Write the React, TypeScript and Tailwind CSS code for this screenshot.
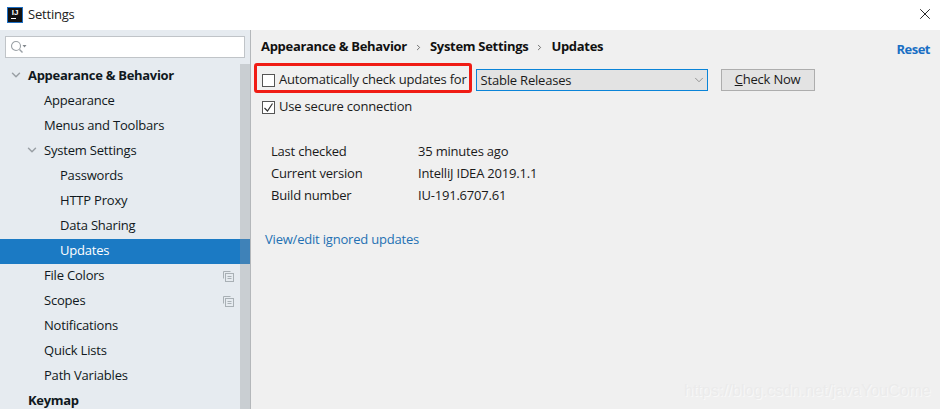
import { ChevronDown, ChevronRight, X } from "lucide-react"

const font = "font-['Open_Sans','Noto_Sans',sans-serif]"

function TreeRow({ label, indent, open, bold, selected, copy }: {
  label: string
  indent: string
  open?: boolean
  bold?: boolean
  selected?: boolean
  copy?: boolean
}) {
  return (
    <div className={`h-[25px] shrink-0 flex items-center relative ${selected ? "bg-[#1b7ac4] text-white" : "text-[#101820]"}`}>
      <div className={`${indent} mt-[-2px] flex items-center ${bold ? "font-bold tracking-[-0.3px]" : ""}`}>{label}</div>
      {open && <ChevronDown className={`absolute ${bold ? "left-[9px]" : "left-[25px]"} top-[4px] w-[14px] h-[14px] text-[#9aa0a5]`} strokeWidth={2.5} />}
      {copy && <CopyIcon />}
    </div>
  )
}

function CopyIcon() {
  return (
    <svg className="absolute left-[223px]" width="11" height="11" viewBox="0 0 11 11" fill="none" stroke="#a9b0b5">
      <path d="M.5 7.5v-7h7" />
      <rect x="2.5" y="2.5" width="8" height="8" />
      <path d="M4.5 5.5h4M4.5 7.5h4" />
    </svg>
  )
}

function InfoRow({ label, value }: { label: string; value: string }) {
  return (
    <div className="h-[22px] flex items-center">
      <div className="w-[147px]">{label}</div>
      <div>{value}</div>
    </div>
  )
}

export default function App() {
  return (
    <div className={`${font} w-[940px] h-[409px] overflow-hidden bg-white text-[13px] tracking-[-0.2px] text-[#1a1a1a] flex flex-col relative`}>
      {/* Title bar */}
      <div className="h-[30px] shrink-0 flex items-center bg-white relative">
        <div className="ml-[7px] w-[16px] h-[16px] bg-[#111] border border-[#1d6fc4] flex flex-col items-center justify-start">
          <span className="text-[8px] leading-[9px] font-bold text-white font-['Liberation_Sans',sans-serif]">IJ</span>
          <span className="ml-[-4px] w-[5px] h-px bg-white mt-[1px]" />
        </div>
        <span className="ml-[5px] text-[13px] text-[#222]">Settings</span>
        <X className="absolute left-[916px] top-[5px] w-[18px] h-[18px] text-[#111]" strokeWidth={1.2} />
      </div>

      <div className="flex-1 flex min-h-0">
        {/* Sidebar */}
        <div className="w-[251px] shrink-0 bg-[#e6ebf0] border-r border-[#b4b7ba] flex flex-col relative">
          <div className="mx-[5px] mt-[6px] h-[22px] shrink-0 bg-white border border-[#c0c4c8] flex items-center pl-[4px]">
            <svg width="17" height="14" viewBox="0 0 17 14" fill="none">
              <circle cx="6" cy="6" r="4.5" stroke="#9aa0a5" strokeWidth="1.1" />
              <path d="M9.5 9.5l3 3" stroke="#9aa0a5" strokeWidth="1.4" />
              <path d="M12.5 5h4l-2 2.5z" fill="#80868b" />
            </svg>
          </div>
          <div className="flex mt-[6px] flex-1 min-h-0">
            <div className="w-[240px] shrink-0 flex flex-col relative z-10">
              <TreeRow label="Appearance & Behavior" indent="pl-[28px]" bold open />
              <TreeRow label="Appearance" indent="pl-[44px]" />
              <TreeRow label="Menus and Toolbars" indent="pl-[44px]" />
              <TreeRow label="System Settings" indent="pl-[44px]" open />
              <TreeRow label="Passwords" indent="pl-[60px]" />
              <TreeRow label="HTTP Proxy" indent="pl-[60px]" />
              <TreeRow label="Data Sharing" indent="pl-[60px]" />
              <TreeRow label="Updates" indent="pl-[60px]" selected />
              <TreeRow label="File Colors" indent="pl-[44px]" copy />
              <TreeRow label="Scopes" indent="pl-[44px]" copy />
              <TreeRow label="Notifications" indent="pl-[44px]" />
              <TreeRow label="Quick Lists" indent="pl-[44px]" />
              <TreeRow label="Path Variables" indent="pl-[44px]" />
              <TreeRow label="Keymap" indent="pl-[28px]" bold />
            </div>
            <div className="w-[10px] bg-[#c9ced2] relative">
              <div className="absolute left-0 right-0 top-[175px] h-[25px] bg-[#3f82b8]" />
            </div>
          </div>
        </div>

        {/* Content */}
        <div className="flex-1 bg-[#f0f0f0] pl-[10px] pt-[8px] relative">
          <div className="h-[18px] flex items-center font-bold tracking-[-0.3px] text-[#111] pr-[10px]">
            <span>Appearance &amp; Behavior</span>
            <ChevronRight className="mx-[7px] w-[9px] h-[9px] text-[#444]" strokeWidth={2} />
            <span>System Settings</span>
            <ChevronRight className="mx-[7px] w-[9px] h-[9px] text-[#444]" strokeWidth={2} />
            <span>Updates</span>
            <span className="ml-auto mt-[6px] text-[#1a6fc4] tracking-[-0.5px]">Reset</span>
          </div>

          <div className="mt-[13px] h-[22px] flex items-center">
            <span className="w-[13px] h-[13px] ml-[1px] bg-white border border-[#555] shrink-0" />
            <span className="ml-[4px] whitespace-nowrap">Automatically check updates for</span>
            <div className="ml-[9px] w-[232px] h-[22px] bg-[#e3e3e3] border border-[#0a84d8] flex items-center justify-between pl-[4px] pr-[1px] shrink-0">
              <span className="mt-[1px]">Stable Releases</span>
              <ChevronDown className="w-[14px] h-[14px] text-[#888]" strokeWidth={1.5} />
            </div>
            <div className="ml-[13px] w-[94px] h-[22px] bg-[#e3e3e3] border border-[#adadad] flex items-center justify-center shrink-0">
              <span><span className="underline">C</span>heck Now</span>
            </div>
          </div>

          <div className="mt-[5px] h-[22px] flex items-center">
            <span className="w-[13px] h-[13px] ml-[1px] bg-white border border-[#555] shrink-0 flex items-center justify-center">
              <svg width="11" height="11" viewBox="0 0 11 11" fill="none" stroke="#333" strokeWidth="1.2">
                <path d="M1.5 6l3 3 5-7.5" />
              </svg>
            </span>
            <span className="ml-[4px]">Use secure connection</span>
          </div>

          <div className="mt-[23px] ml-[10px]">
            <InfoRow label="Last checked" value="35 minutes ago" />
            <InfoRow label="Current version" value="IntelliJ IDEA 2019.1.1" />
            <InfoRow label="Build number" value="IU-191.6707.61" />
          </div>

          <div className="mt-[23px] ml-[4px] text-[#2470b3]">View/edit ignored updates</div>

          {/* Red annotation */}
          <div className="absolute left-[3px] top-[33px] w-[218px] h-[30px] border-[3px] border-[#f01c14] rounded-[3px]" />
          {/* Watermark */}
          <div className="absolute left-[433px] top-[349px] font-['Liberation_Sans',sans-serif] tracking-normal text-[16px] text-[#ebebeb] [text-shadow:1px_1px_0_#f8f8f8] whitespace-nowrap">
            https://blog.csdn.net/javaYouCome
          </div>
        </div>
      </div>
    </div>
  )
}
